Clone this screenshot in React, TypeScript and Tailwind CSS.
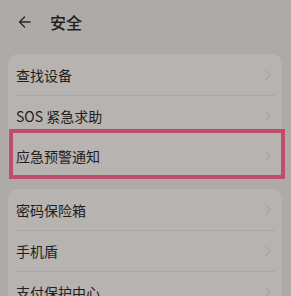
import { ChevronRight } from "lucide-react"

const font = { fontFamily: '"Noto Sans CJK SC", "Noto Sans", sans-serif' }

function Row({ label, divider = true, marked = false }: { label: string; divider?: boolean; marked?: boolean }) {
  return (
    <div className="relative">
      <div className="flex h-10 items-center justify-between pl-2 pr-[5px]">
        <span className="text-[14px] leading-none text-[#201e1d]">{label}</span>
        <ChevronRight size={18} strokeWidth={1.3} className="text-[#9d9896]" />
      </div>
      {divider && <div className="ml-2 mr-[7px] h-px bg-[#aca7a4]" />}
      {marked && (
        <div className="pointer-events-none absolute -top-[7px] -bottom-[3px] left-[1px] -right-[3px] border-[4px] border-[#bf4e6b]" />
      )}
    </div>
  )
}

export default function App() {
  return (
    <div className="h-[296px] w-[291px] overflow-hidden bg-[#aeaaa7]" style={font}>
      <div className="flex h-[44px] items-center pl-[18px]">
        <svg width="13" height="12" viewBox="0 0 13 12" fill="none" stroke="#2b2928" strokeWidth="1.4" strokeLinecap="round" strokeLinejoin="round">
          <path d="M12 6H1.5M6.5 1L1.5 6l5 5" />
        </svg>
        <span className="ml-[19px] text-[16px] font-medium text-[#1f1d1c]">安全</span>
      </div>
      <div className="pl-2 pr-[9px] pt-[10px]">
        <div className="rounded-[10px] bg-[#b7b3b0] py-px">
          <Row label="查找设备" />
          <Row label="SOS 紧急求助" divider={false} />
          <Row label="应急预警通知" divider={false} marked />
        </div>
        <div className="mt-3 rounded-[10px] bg-[#b7b3b0] py-px">
          <Row label="密码保险箱" />
          <Row label="手机盾" />
          <Row label="支付保护中心" divider={false} />
        </div>
      </div>
    </div>
  )
}
